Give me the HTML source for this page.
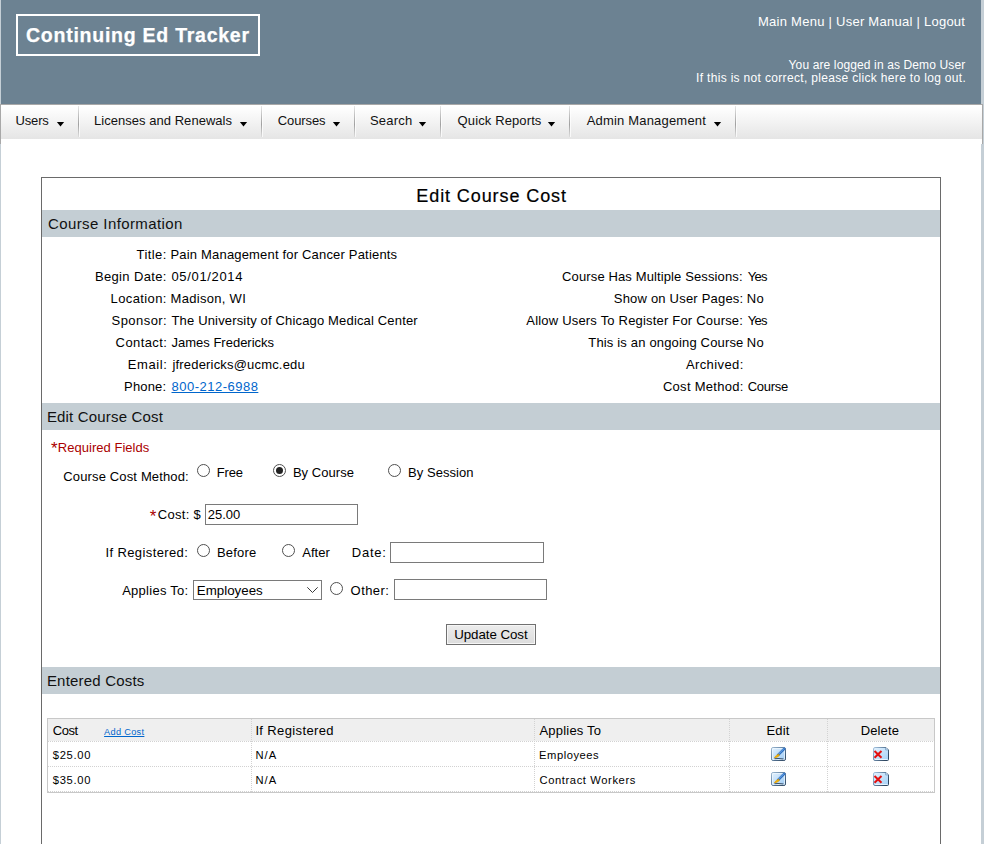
<!DOCTYPE html>
<html><head><meta charset="utf-8"><style>
html,body{margin:0;padding:0}
body{width:984px;height:844px;overflow:hidden;position:relative;background:#c5cfd6;font-family:"Liberation Sans",sans-serif}
.b{position:absolute}
.t{position:absolute;white-space:nowrap;line-height:1}
.u{text-decoration:underline}
.radio{width:13px;height:13px;border-radius:50%;border:1px solid #505050;box-sizing:border-box;background:#fff}
.dot{width:7px;height:7px;border-radius:50%;background:#222}
.arr{width:0;height:0;border-left:4px solid transparent;border-right:4px solid transparent;border-top:4px solid #000}
</style></head><body>
<div class="b" style="left:1px;top:0px;width:980px;height:104px;background:#6c8292"></div>
<div class="b" style="left:16px;top:14px;width:244px;height:42px;border:2px solid #fff;box-sizing:border-box"></div>
<div class="b" style="left:0px;top:104px;width:983px;height:40px;background:#fff;border:1px solid #a8a8a8;border-bottom:0;box-sizing:border-box"></div>
<div class="b" style="left:1px;top:105px;width:981px;height:34px;background:linear-gradient(#ffffff 5%,#e5e5e5)"></div>
<div class="b" style="left:78px;top:106px;width:1px;height:31px;background:linear-gradient(rgba(160,160,160,0.25),#a0a0a0 60%,rgba(160,160,160,0.15))"></div>
<div class="b" style="left:79px;top:106px;width:1px;height:31px;background:rgba(255,255,255,0.7)"></div>
<div class="b" style="left:261px;top:106px;width:1px;height:31px;background:linear-gradient(rgba(160,160,160,0.25),#a0a0a0 60%,rgba(160,160,160,0.15))"></div>
<div class="b" style="left:262px;top:106px;width:1px;height:31px;background:rgba(255,255,255,0.7)"></div>
<div class="b" style="left:354px;top:106px;width:1px;height:31px;background:linear-gradient(rgba(160,160,160,0.25),#a0a0a0 60%,rgba(160,160,160,0.15))"></div>
<div class="b" style="left:355px;top:106px;width:1px;height:31px;background:rgba(255,255,255,0.7)"></div>
<div class="b" style="left:440px;top:106px;width:1px;height:31px;background:linear-gradient(rgba(160,160,160,0.25),#a0a0a0 60%,rgba(160,160,160,0.15))"></div>
<div class="b" style="left:441px;top:106px;width:1px;height:31px;background:rgba(255,255,255,0.7)"></div>
<div class="b" style="left:569px;top:106px;width:1px;height:31px;background:linear-gradient(rgba(160,160,160,0.25),#a0a0a0 60%,rgba(160,160,160,0.15))"></div>
<div class="b" style="left:570px;top:106px;width:1px;height:31px;background:rgba(255,255,255,0.7)"></div>
<div class="b" style="left:735px;top:106px;width:1px;height:31px;background:linear-gradient(rgba(160,160,160,0.25),#a0a0a0 60%,rgba(160,160,160,0.15))"></div>
<div class="b" style="left:736px;top:106px;width:1px;height:31px;background:rgba(255,255,255,0.7)"></div>
<svg class="b" style="left:56.0px;top:121px" width="9" height="7"><polygon points="0.9,1 8.1,1 4.5,5.4" fill="#000"/></svg>
<svg class="b" style="left:239.0px;top:121px" width="9" height="7"><polygon points="0.9,1 8.1,1 4.5,5.4" fill="#000"/></svg>
<svg class="b" style="left:332.0px;top:121px" width="9" height="7"><polygon points="0.9,1 8.1,1 4.5,5.4" fill="#000"/></svg>
<svg class="b" style="left:418.0px;top:121px" width="9" height="7"><polygon points="0.9,1 8.1,1 4.5,5.4" fill="#000"/></svg>
<svg class="b" style="left:547.0px;top:121px" width="9" height="7"><polygon points="0.9,1 8.1,1 4.5,5.4" fill="#000"/></svg>
<svg class="b" style="left:713.0px;top:121px" width="9" height="7"><polygon points="0.9,1 8.1,1 4.5,5.4" fill="#000"/></svg>
<div class="b" style="left:1px;top:144px;width:980px;height:700px;background:#fff"></div>
<div class="b" style="left:41px;top:177px;width:900px;height:700px;border:1px solid #6a6a6a;border-bottom:0;box-sizing:border-box"></div>
<div class="b" style="left:42px;top:210px;width:898px;height:27px;background:#c4ced4"></div>
<div class="b" style="left:42px;top:403px;width:898px;height:27px;background:#c4ced4"></div>
<div class="b" style="left:42px;top:667px;width:898px;height:27px;background:#c4ced4"></div>
<div class="b radio" style="left:197px;top:464px"></div>
<div class="b radio" style="left:273px;top:464px"></div><div class="b dot" style="left:276px;top:467px"></div>
<div class="b radio" style="left:388px;top:464px"></div>
<div class="b radio" style="left:197px;top:544px"></div>
<div class="b radio" style="left:282px;top:544px"></div>
<div class="b radio" style="left:330px;top:582px"></div>
<div class="b" style="left:205px;top:504px;width:153px;height:21px;border:1px solid #7a7a7a;box-sizing:border-box;background:#fff"></div>
<div class="b" style="left:390px;top:542px;width:154px;height:21px;border:1px solid #7a7a7a;box-sizing:border-box;background:#fff"></div>
<div class="b" style="left:394px;top:579px;width:153px;height:21px;border:1px solid #7a7a7a;box-sizing:border-box;background:#fff"></div>
<div class="b" style="left:193px;top:580px;width:129px;height:20px;border:1px solid #7a7a7a;box-sizing:border-box;background:#fff"></div>
<svg class="b" style="left:306px;top:585px" width="14" height="10" viewBox="0 0 14 10"><polyline points="1.3,2.3 6.5,7.5 11.7,2.3" fill="none" stroke="#3a3a3a" stroke-width="1"/></svg>
<div class="b" style="left:446px;top:624px;width:90px;height:21px;border:1px solid #707070;box-sizing:border-box;background:linear-gradient(#ececec,#dcdcdc);box-shadow:inset 0 0 0 1px #f6f6f6"></div>
<div class="b" style="left:47px;top:718px;width:888px;height:75px;border:1px solid #c8c8c8;box-sizing:border-box;background:#fff"></div>
<div class="b" style="left:48px;top:719px;width:886px;height:22px;background:#efefef"></div>
<div class="b" style="left:48px;top:741px;width:886px;height:1px;background:repeating-linear-gradient(90deg,#d2d2d2 0 1px,transparent 1px 2px)"></div>
<div class="b" style="left:48px;top:766px;width:886px;height:1px;background:repeating-linear-gradient(90deg,#d2d2d2 0 1px,transparent 1px 2px)"></div>
<div class="b" style="left:48px;top:791px;width:886px;height:1px;background:repeating-linear-gradient(90deg,#d2d2d2 0 1px,transparent 1px 2px)"></div>
<div class="b" style="left:251px;top:719px;width:1px;height:73px;background:repeating-linear-gradient(180deg,#d2d2d2 0 1px,transparent 1px 2px)"></div>
<div class="b" style="left:534px;top:719px;width:1px;height:73px;background:repeating-linear-gradient(180deg,#d2d2d2 0 1px,transparent 1px 2px)"></div>
<div class="b" style="left:729px;top:719px;width:1px;height:73px;background:repeating-linear-gradient(180deg,#d2d2d2 0 1px,transparent 1px 2px)"></div>
<div class="b" style="left:827px;top:719px;width:1px;height:73px;background:repeating-linear-gradient(180deg,#d2d2d2 0 1px,transparent 1px 2px)"></div>
<svg class="b" style="left:771px;top:747px" width="16" height="15" viewBox="0 0 16 15"><defs><linearGradient id="eg747" x1="0" y1="0" x2="1" y2="1"><stop offset="0" stop-color="#e4f2fe"/><stop offset="1" stop-color="#9ccaf4"/></linearGradient><linearGradient id="es747" x1="0" y1="0" x2="1" y2="1"><stop offset="0" stop-color="#9ab6d0"/><stop offset="0.5" stop-color="#5a7a9a"/><stop offset="1" stop-color="#2e4660"/></linearGradient></defs><rect x="0.5" y="0.5" width="14" height="13" rx="1.6" fill="url(#eg747)" stroke="url(#es747)"/><rect x="1.5" y="1.5" width="12" height="11" rx="0.5" fill="none" stroke="#f4faff" stroke-width="0.8" opacity="0.8"/><path d="M13.2 1.8 L7.2 7.8" stroke="#2f6fc0" stroke-width="2.6" stroke-linecap="round"/><path d="M13 1.6 L7.6 7" stroke="#7ab4f0" stroke-width="0.9"/><path d="M7.6 7.2 Q5.5 8 3.6 10.2 Q3.2 10.9 4 10.8 Q6.5 10.3 8.4 8.4 Z" fill="#f6b800" stroke="#e09a00" stroke-width="0.8"/><path d="M3.5 11.8 Q8 11.2 12.5 12" stroke="#37506a" stroke-width="1.1" fill="none"/></svg>
<svg class="b" style="left:873px;top:747px" width="17" height="15" viewBox="0 0 17 15"><defs><linearGradient id="dg747" x1="0" y1="0" x2="1" y2="1"><stop offset="0" stop-color="#e4f2fe"/><stop offset="1" stop-color="#a4d0f6"/></linearGradient><linearGradient id="ds747" x1="0" y1="0" x2="1" y2="0.6"><stop offset="0" stop-color="#a8c6e2"/><stop offset="0.5" stop-color="#6684a2"/><stop offset="1" stop-color="#2e4660"/></linearGradient></defs><path d="M0.5 2 Q0.5 0.5 2 0.5 L13 0.5 L15.5 3 L15.5 12.5 Q15.5 13.5 14.5 13.5 L2 13.5 Q0.5 13.5 0.5 12 Z" fill="url(#dg747)" stroke="url(#ds747)"/><path d="M2 12.5 L14.5 12.5" stroke="#f4faff" stroke-width="0.8"/><path d="M12.6 0.8 L12.6 2.9 L15.2 2.9" fill="#d8ecfc" stroke="#6a90b8" stroke-width="0.7"/><path d="M1.5 4 L8.5 10.8 M8.5 4 L1.5 10.8" stroke="#e41010" stroke-width="2"/></svg>
<svg class="b" style="left:771px;top:772px" width="16" height="15" viewBox="0 0 16 15"><defs><linearGradient id="eg772" x1="0" y1="0" x2="1" y2="1"><stop offset="0" stop-color="#e4f2fe"/><stop offset="1" stop-color="#9ccaf4"/></linearGradient><linearGradient id="es772" x1="0" y1="0" x2="1" y2="1"><stop offset="0" stop-color="#9ab6d0"/><stop offset="0.5" stop-color="#5a7a9a"/><stop offset="1" stop-color="#2e4660"/></linearGradient></defs><rect x="0.5" y="0.5" width="14" height="13" rx="1.6" fill="url(#eg772)" stroke="url(#es772)"/><rect x="1.5" y="1.5" width="12" height="11" rx="0.5" fill="none" stroke="#f4faff" stroke-width="0.8" opacity="0.8"/><path d="M13.2 1.8 L7.2 7.8" stroke="#2f6fc0" stroke-width="2.6" stroke-linecap="round"/><path d="M13 1.6 L7.6 7" stroke="#7ab4f0" stroke-width="0.9"/><path d="M7.6 7.2 Q5.5 8 3.6 10.2 Q3.2 10.9 4 10.8 Q6.5 10.3 8.4 8.4 Z" fill="#f6b800" stroke="#e09a00" stroke-width="0.8"/><path d="M3.5 11.8 Q8 11.2 12.5 12" stroke="#37506a" stroke-width="1.1" fill="none"/></svg>
<svg class="b" style="left:873px;top:772px" width="17" height="15" viewBox="0 0 17 15"><defs><linearGradient id="dg772" x1="0" y1="0" x2="1" y2="1"><stop offset="0" stop-color="#e4f2fe"/><stop offset="1" stop-color="#a4d0f6"/></linearGradient><linearGradient id="ds772" x1="0" y1="0" x2="1" y2="0.6"><stop offset="0" stop-color="#a8c6e2"/><stop offset="0.5" stop-color="#6684a2"/><stop offset="1" stop-color="#2e4660"/></linearGradient></defs><path d="M0.5 2 Q0.5 0.5 2 0.5 L13 0.5 L15.5 3 L15.5 12.5 Q15.5 13.5 14.5 13.5 L2 13.5 Q0.5 13.5 0.5 12 Z" fill="url(#dg772)" stroke="url(#ds772)"/><path d="M2 12.5 L14.5 12.5" stroke="#f4faff" stroke-width="0.8"/><path d="M12.6 0.8 L12.6 2.9 L15.2 2.9" fill="#d8ecfc" stroke="#6a90b8" stroke-width="0.7"/><path d="M1.5 4 L8.5 10.8 M8.5 4 L1.5 10.8" stroke="#e41010" stroke-width="2"/></svg>
<div class="t" style="left:26.0px;top:26.3px;font-size:19.5px;letter-spacing:0.75px;color:#fff;font-weight:700;-webkit-text-stroke:0.25px #fff">Continuing Ed Tracker</div>
<div class="t" style="left:758.0px;top:15.2px;font-size:13px;letter-spacing:0.258px;color:#fff">Main Menu | User Manual | Logout</div>
<div class="t" style="left:788.6px;top:59.2px;font-size:12px;letter-spacing:0.125px;color:#fff">You are logged in as Demo User</div>
<div class="t" style="left:696.0px;top:72.3px;font-size:12px;letter-spacing:0.327px;color:#fff">If this is not correct, please click here to log out.</div>
<div class="t" style="left:15.5px;top:113.7px;font-size:13px;letter-spacing:-0.15px;color:#111">Users</div>
<div class="t" style="left:94.1px;top:113.7px;font-size:13px;letter-spacing:0.03px;color:#111">Licenses and Renewals</div>
<div class="t" style="left:277.8px;top:113.7px;font-size:13px;letter-spacing:-0.101px;color:#111">Courses</div>
<div class="t" style="left:370.0px;top:113.7px;font-size:13px;letter-spacing:0.2px;color:#111">Search</div>
<div class="t" style="left:457.6px;top:113.7px;font-size:13px;letter-spacing:0.117px;color:#111">Quick Reports</div>
<div class="t" style="left:586.7px;top:113.7px;font-size:13px;letter-spacing:0.187px;color:#111">Admin Management</div>
<div class="t" style="left:416.3px;top:186.8px;font-size:18px;letter-spacing:0.907px;color:#000;-webkit-text-stroke:0.2px #000">Edit Course Cost</div>
<div class="t" style="left:47.9px;top:215.9px;font-size:15px;letter-spacing:0.412px;color:#111">Course Information</div>
<div class="t" style="left:136.5px;top:248.3px;font-size:13px;letter-spacing:0.44px;color:#000">Title:</div>
<div class="t" style="left:94.9px;top:270.3px;font-size:13px;letter-spacing:0.36px;color:#000">Begin Date:</div>
<div class="t" style="left:110.5px;top:292.1px;font-size:13px;letter-spacing:0.402px;color:#000">Location:</div>
<div class="t" style="left:111.5px;top:314.0px;font-size:13px;letter-spacing:0.457px;color:#000">Sponsor:</div>
<div class="t" style="left:115.6px;top:335.8px;font-size:13px;letter-spacing:0.401px;color:#000">Contact:</div>
<div class="t" style="left:127.8px;top:358.0px;font-size:13px;letter-spacing:0.6px;color:#000">Email:</div>
<div class="t" style="left:124.1px;top:379.8px;font-size:13px;letter-spacing:0.16px;color:#000">Phone:</div>
<div class="t" style="left:170.5px;top:248.3px;font-size:13px;letter-spacing:0.182px;color:#000">Pain Management for Cancer Patients</div>
<div class="t" style="left:171.5px;top:270.3px;font-size:13px;letter-spacing:0.645px;color:#000">05/01/2014</div>
<div class="t" style="left:170.5px;top:292.1px;font-size:13px;letter-spacing:0.3px;color:#000">Madison, WI</div>
<div class="t" style="left:171.5px;top:314.0px;font-size:13px;letter-spacing:0.16px;color:#000">The University of Chicago Medical Center</div>
<div class="t" style="left:171.5px;top:335.8px;font-size:13px;letter-spacing:0.0px;color:#000">James Fredericks</div>
<div class="t" style="left:172.5px;top:358.0px;font-size:13px;letter-spacing:0.179px;color:#000">jfredericks@ucmc.edu</div>
<div class="t u" style="left:171.5px;top:379.8px;font-size:13px;letter-spacing:0.491px;color:#0066cc">800-212-6988</div>
<div class="t" style="left:562.1px;top:270.3px;font-size:13px;letter-spacing:0.122px;color:#000">Course Has Multiple Sessions:</div>
<div class="t" style="left:613.8px;top:292.1px;font-size:13px;letter-spacing:0.2px;color:#000">Show on User Pages:</div>
<div class="t" style="left:526.3px;top:314.0px;font-size:13px;letter-spacing:0.194px;color:#000">Allow Users To Register For Course:</div>
<div class="t" style="left:588.3px;top:335.8px;font-size:13px;letter-spacing:0.167px;color:#000">This is an ongoing Course</div>
<div class="t" style="left:685.9px;top:358.0px;font-size:13px;letter-spacing:0.402px;color:#000">Archived:</div>
<div class="t" style="left:662.9px;top:379.8px;font-size:13px;letter-spacing:0.29px;color:#000">Cost Method:</div>
<div class="t" style="left:747.7px;top:270.3px;font-size:13px;letter-spacing:-0.7px;color:#000">Yes</div>
<div class="t" style="left:746.7px;top:292.1px;font-size:13px;letter-spacing:0.4px;color:#000">No</div>
<div class="t" style="left:747.7px;top:314.0px;font-size:13px;letter-spacing:-0.7px;color:#000">Yes</div>
<div class="t" style="left:746.7px;top:335.8px;font-size:13px;letter-spacing:0.4px;color:#000">No</div>
<div class="t" style="left:747.7px;top:379.8px;font-size:13px;letter-spacing:-0.28px;color:#000">Course</div>
<div class="t" style="left:46.9px;top:408.7px;font-size:15px;letter-spacing:0.173px;color:#111">Edit Course Cost</div>
<div class="t" style="left:50.9px;top:440.2px;font-size:17px;letter-spacing:0px;color:#aa0000">*</div>
<div class="t" style="left:57.8px;top:440.7px;font-size:13px;letter-spacing:0.028px;color:#aa0000">Required Fields</div>
<div class="t" style="left:63.3px;top:470.2px;font-size:13px;letter-spacing:0.144px;color:#000">Course Cost Method:</div>
<div class="t" style="left:216.7px;top:465.6px;font-size:13px;letter-spacing:-0.134px;color:#000">Free</div>
<div class="t" style="left:292.9px;top:465.6px;font-size:13px;letter-spacing:0.052px;color:#000">By Course</div>
<div class="t" style="left:408.1px;top:465.6px;font-size:13px;letter-spacing:0.044px;color:#000">By Session</div>
<div class="t" style="left:149.8px;top:507.8px;font-size:17px;letter-spacing:0px;color:#aa0000">*</div>
<div class="t" style="left:157.8px;top:507.8px;font-size:13px;letter-spacing:0.3px;color:#000">Cost: $</div>
<div class="t" style="left:207.8px;top:507.8px;font-size:13px;letter-spacing:-0.05px;color:#000">25.00</div>
<div class="t" style="left:105.5px;top:545.7px;font-size:13px;letter-spacing:0.384px;color:#000">If Registered:</div>
<div class="t" style="left:217.0px;top:545.7px;font-size:13px;letter-spacing:0.2px;color:#000">Before</div>
<div class="t" style="left:302.2px;top:545.7px;font-size:13px;letter-spacing:0.05px;color:#000">After</div>
<div class="t" style="left:351.7px;top:546.0px;font-size:13px;letter-spacing:0.8px;color:#000">Date:</div>
<div class="t" style="left:122.2px;top:584.2px;font-size:13px;letter-spacing:0.26px;color:#000">Applies To:</div>
<div class="t" style="left:196.8px;top:583.8px;font-size:13.33px;letter-spacing:0.002px;color:#000">Employees</div>
<div class="t" style="left:350.6px;top:583.6px;font-size:13px;letter-spacing:0.44px;color:#000">Other:</div>
<div class="t" style="left:454.2px;top:627.8px;font-size:13.33px;letter-spacing:-0.06px;color:#000">Update Cost</div>
<div class="t" style="left:46.9px;top:672.6px;font-size:15px;letter-spacing:0.199px;color:#111">Entered Costs</div>
<div class="t" style="left:52.7px;top:723.8px;font-size:13px;letter-spacing:-0.4px;color:#000">Cost</div>
<div class="t u" style="left:104.1px;top:727.6px;font-size:9.2px;letter-spacing:0.313px;color:#0066cc">Add Cost</div>
<div class="t" style="left:255.4px;top:723.8px;font-size:13px;letter-spacing:0.367px;color:#000">If Registered</div>
<div class="t" style="left:539.5px;top:723.8px;font-size:13px;letter-spacing:0.201px;color:#000">Applies To</div>
<div class="t" style="left:766.4px;top:723.8px;font-size:13px;letter-spacing:0.199px;color:#000">Edit</div>
<div class="t" style="left:860.7px;top:723.8px;font-size:13px;letter-spacing:0.12px;color:#000">Delete</div>
<div class="t" style="left:52.7px;top:749.5px;font-size:11.2px;letter-spacing:0.72px;color:#000">$25.00</div>
<div class="t" style="left:255.4px;top:749.5px;font-size:11.2px;letter-spacing:1.1px;color:#000">N/A</div>
<div class="t" style="left:539.1px;top:749.5px;font-size:11.2px;letter-spacing:0.525px;color:#000">Employees</div>
<div class="t" style="left:52.7px;top:774.6px;font-size:11.2px;letter-spacing:0.72px;color:#000">$35.00</div>
<div class="t" style="left:255.4px;top:774.6px;font-size:11.2px;letter-spacing:1.1px;color:#000">N/A</div>
<div class="t" style="left:539.5px;top:774.6px;font-size:11.2px;letter-spacing:0.6px;color:#000">Contract Workers</div>
</body></html>
